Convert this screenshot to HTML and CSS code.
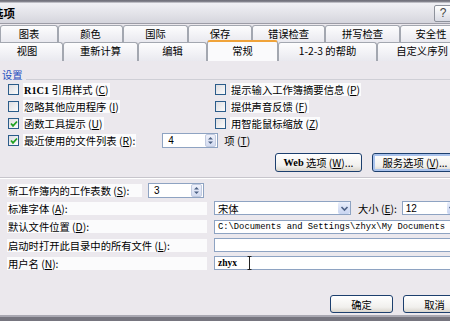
FILE: index.html
```html
<!DOCTYPE html>
<html lang="zh-CN">

<head>
    <meta charset="UTF-8">
    <title>选项</title>
    <link rel="stylesheet" href="styles.css">
</head>

<body>
    <div class="dialog">
        <!-- Title bar -->
        <div class="titlebar">
            <span class="title">选项</span>
            <span class="help">?</span>
        </div>

        <!-- Tabs -->
        <div class="tabs">
            <div class="tab-row row-back">
                <div class="tab">图表</div>
                <div class="tab">颜色</div>
                <div class="tab">国际</div>
                <div class="tab">保存</div>
                <div class="tab">错误检查</div>
                <div class="tab">拼写检查</div>
                <div class="tab">安全性</div>
            </div>
            <div class="tab-row row-front">
                <div class="tab">视图</div>
                <div class="tab">重新计算</div>
                <div class="tab">编辑</div>
                <div class="tab active">常规</div>
                <div class="tab">1-2-3 的帮助</div>
                <div class="tab">自定义序列</div>
            </div>
        </div>

        <!-- Page -->
        <div class="page">
            <div class="group-title"><span>设置</span></div>

            <div class="checks">
                <div class="check"><span class="box"></span><span class="txt"><b class="latin">R1C1</b> 引用样式 (<u>C</u>)</span></div>
                <div class="check"><span class="box"></span><span class="txt">提示输入工作簿摘要信息 (<u>P</u>)</span></div>
                <div class="check"><span class="box"></span><span class="txt">忽略其他应用程序 (<u>I</u>)</span></div>
                <div class="check"><span class="box"></span><span class="txt">提供声音反馈 (<u>F</u>)</span></div>
                <div class="check"><span class="box on"><svg width="8" height="8" viewBox="0 0 8 8"><polyline points="1,3.5 3,5.8 7,1.5" fill="none" stroke="#21a121" stroke-width="1.8"/></svg></span><span class="txt">函数工具提示 (<u>U</u>)</span></div>
                <div class="check"><span class="box"></span><span class="txt">用智能鼠标缩放 (<u>Z</u>)</span></div>
                <div class="check wide">
                    <span class="box on"><svg width="8" height="8" viewBox="0 0 8 8"><polyline points="1,3.5 3,5.8 7,1.5" fill="none" stroke="#21a121" stroke-width="1.8"/></svg></span>
                    <span class="txt">最近使用的文件列表 (<u>R</u>):</span>
                    <span class="spin recent"><span class="val">4</span><span class="spin-btn"><svg width="9" height="11" viewBox="0 0 9 11"><path d="M2 4.5 L4.5 2 L7 4.5 Z M2 6.5 L4.5 9 L7 6.5 Z" fill="#4d6185"/></svg></span></span>
                    <span class="unit">项 (<u>T</u>)</span>
                </div>
            </div>

            <div class="btn-row">
                <span class="btn web"><span class="latin">Web</span>&nbsp;选项 (<u>W</u>)...</span>
                <span class="btn focus">服务选项 (<u>V</u>)...</span>
            </div>

            <div class="separator"></div>

            <div class="fields">
                <div class="field">
                    <span class="lbl short">新工作簿内的工作表数 (<u>S</u>):</span>
                    <span class="spin sheets"><span class="val">3</span><span class="spin-btn"><svg width="9" height="11" viewBox="0 0 9 11"><path d="M2 4.5 L4.5 2 L7 4.5 Z M2 6.5 L4.5 9 L7 6.5 Z" fill="#4d6185"/></svg></span></span>
                </div>
                <div class="field">
                    <span class="lbl">标准字体 (<u>A</u>):</span>
                    <span class="select font-sel"><span class="val">宋体</span><span class="drop"><svg width="9" height="7" viewBox="0 0 9 7"><polyline points="1.5,2 4.5,5 7.5,2" fill="none" stroke="#4d6185" stroke-width="1.6"/></svg></span></span>
                    <span class="size-lbl">大小 (<u>E</u>):</span>
                    <span class="select size-sel"><span class="val">12</span><span class="drop"><svg width="9" height="7" viewBox="0 0 9 7"><polyline points="1.5,2 4.5,5 7.5,2" fill="none" stroke="#4d6185" stroke-width="1.6"/></svg></span></span>
                </div>
                <div class="field">
                    <span class="lbl">默认文件位置 (<u>D</u>):</span>
                    <span class="input mono">C:\Documents and Settings\zhyx\My Documents</span>
                </div>
                <div class="field">
                    <span class="lbl">启动时打开此目录中的所有文件 (<u>L</u>):</span>
                    <span class="input"></span>
                </div>
                <div class="field">
                    <span class="lbl">用户名 (<u>N</u>):</span>
                    <span class="input user">zhyx<svg class="ibeam" width="5" height="14" viewBox="0 0 5 14"><path d="M0.5 0.5 H4.5 M2.5 0.5 V13.5 M0.5 13.5 H4.5" fill="none" stroke="#222" stroke-width="1"/></svg></span>
                </div>
            </div>

            <div class="dlg-buttons">
                <span class="btn ok">确定</span>
                <span class="btn cancel">取消</span>
            </div>
        </div>

        <div class="footer"></div>
    </div>
</body>

</html>
```

FILE: styles.css
```css
/* Dialog base */

* {
    box-sizing: border-box;
}

body {
    margin: 0;
    width: 450px;
    height: 321px;
    overflow: hidden;
    font-family: "Noto Sans CJK SC", "Noto Sans", sans-serif;
    font-size: 10.3px;
    color: #000;
    background: #ebe8ed;
}

.dialog {
    width: 450px;
    height: 321px;
    display: flex;
    flex-direction: column;
    overflow: hidden;
}

u {
    text-decoration: underline;
    text-underline-offset: 1px;
}

.latin {
    font-family: "Liberation Serif", serif;
    font-weight: bold;
}

/* Title bar */

.titlebar {
    height: 24px;
    flex: none;
    display: flex;
    align-items: center;
    justify-content: space-between;
    background: linear-gradient(#6c6c76 0, #8a8a94 2px, #f1f1f5 3px, #e2e2e8 14px, #d6d6de 22px);
    border-bottom: 1px solid #9c9ca6;
}

.title {
    margin-left: -8px;
    font-weight: bold;
    font-size: 11.5px;
    padding-top: 3px;
}

.help {
    width: 18px;
    height: 17px;
    margin-top: 3px;
    margin-right: -2px;
    border: 1px solid #8e929c;
    border-radius: 2px;
    background: linear-gradient(#ffffff, #d9dbe4);
    font-family: "Liberation Sans", sans-serif;
    font-size: 12px;
    color: #444;
    text-align: center;
    line-height: 15px;
}

/* Tabs */

.tabs {
    flex: none;
    margin-top: 1px;
}

.tab-row {
    display: grid;
    height: 17px;
}

.row-back {
    grid-template-columns: 58px 65px 65px 64px 73px 75px 62px;
}

.row-front {
    height: 18px;
    margin-left: -9px;
    grid-template-columns: 72px 75px 69px 71px 99px 90px;
    position: relative;
    z-index: 1;
}

.tab {
    border: 1px solid #a3a7b0;
    border-bottom: none;
    border-radius: 3px 3px 0 0;
    background: linear-gradient(#fdfdfe, #e9e9ef);
    text-align: center;
    line-height: 16px;
    white-space: nowrap;
}

.tab.active {
    margin-top: -2px;
    height: 21px;
    background: #fafafc;
    border-top: 2px solid #f0a33a;
    line-height: 18px;
}

/* Page */

.page {
    flex: 1;
    padding-left: 7px;
    border-top: 1px solid #a3a7b0;
    display: flex;
    flex-direction: column;
}

.group-title {
    display: flex;
    height: 13px;
    margin-top: 7px;
    color: #1e4fbf;
    line-height: 13px;
    margin-left: -5px;
}

.group-title::after {
    content: "";
    flex: 1;
    height: 1px;
    margin-top: 11px;
    margin-left: 3px;
    background: #cfcfd6;
}

.checks {
    display: grid;
    grid-template-columns: 207px 1fr;
    grid-auto-rows: 17px;
}

.check {
    display: flex;
    align-items: center;
    padding-left: 1px;
    white-space: nowrap;
}

.check.wide {
    grid-column: 1 / 3;
}

.box {
    width: 11px;
    height: 11px;
    flex: none;
    border: 1px solid #2b5c8a;
    background: linear-gradient(135deg, #dedee2, #fbfbfb);
    display: flex;
    align-items: center;
    justify-content: center;
    margin-right: 4px;
}

.txt,
.lbl {
    background: #fbfbfc;
    line-height: 13px;
    padding: 0 1px;
    white-space: nowrap;
}

.unit {
    margin-left: 6px;
}

/* Spin boxes */

.spin {
    display: flex;
    align-items: center;
    justify-content: space-between;
    width: 56px;
    height: 15px;
    border: 1px solid #8ea3c2;
    background: #fff;
    font-family: "Liberation Sans", sans-serif;
    font-size: 10px;
    padding-left: 5px;
}

.spin.recent {
    margin-left: 26px;
}

.spin-btn {
    width: 11px;
    height: 13px;
    margin-right: 1px;
    border: 1px solid #c2cbe0;
    border-radius: 2px;
    background: linear-gradient(#eef1fb, #d3dbf0);
    display: flex;
    align-items: center;
    justify-content: center;
}

/* Buttons */

.btn-row {
    display: flex;
    gap: 10px;
    margin-top: 4px;
    padding-left: 268px;
}

.btn {
    flex: none;
    height: 19px;
    border: 1px solid #1c3f6e;
    border-radius: 3px;
    background: linear-gradient(#ffffff, #f1f0ed 70%, #d9d5cd);
    display: flex;
    align-items: center;
    justify-content: center;
    white-space: nowrap;
}

.btn.web {
    width: 87px;
}

.btn.focus {
    width: 86px;
    box-shadow: inset 0 0 0 2px #a9c2ec;
}

.separator {
    height: 2px;
    margin-top: 5px;
    margin-left: -7px;
    border-top: 1px solid #c7c5cc;
    border-bottom: 1px solid #fff;
}

/* Fields */

.fields {
    margin-top: 2px;
    display: flex;
    flex-direction: column;
}

.field {
    height: 18.3px;
    display: flex;
    align-items: center;
}

.lbl {
    width: 200px;
    flex: none;
    margin-right: 7px;
}

.lbl.short {
    width: 135px;
    margin-right: 6px;
}

.select {
    height: 14px;
    flex: none;
    border: 1px solid #8ea3c2;
    background: #fff;
    display: flex;
    align-items: center;
    justify-content: space-between;
    padding-left: 3px;
}

.font-sel {
    width: 137px;
}

.size-sel {
    width: 58px;
    font-family: "Liberation Sans", sans-serif;
    font-size: 10px;
}

.drop {
    width: 12px;
    height: 12px;
    border-radius: 2px;
    background: linear-gradient(#e9eefb, #c9d5f1);
    display: flex;
    align-items: center;
    justify-content: center;
}

.size-lbl {
    margin-left: 7px;
    margin-right: 5px;
    white-space: nowrap;
}

.input {
    width: 246px;
    height: 14px;
    flex: none;
    border: 1px solid #8ea3c2;
    background: #fff;
    display: flex;
    align-items: center;
    padding-left: 3px;
    white-space: nowrap;
}

.mono {
    font-family: "Liberation Mono", monospace;
    font-size: 8.8px;
}

.user {
    font-family: "Liberation Serif", serif;
    font-weight: bold;
    font-size: 9.5px;
}

.ibeam {
    margin-left: 10px;
}

/* Dialog buttons */

.dlg-buttons {
    display: flex;
    gap: 10px;
    margin-top: 23px;
    padding-left: 323px;
}

.btn.ok,
.btn.cancel {
    width: 63px;
    height: 18px;
}

.footer {
    height: 6px;
    flex: none;
    border-top: 2px solid #a9a8b2;
    background: #76757f;
}
```
